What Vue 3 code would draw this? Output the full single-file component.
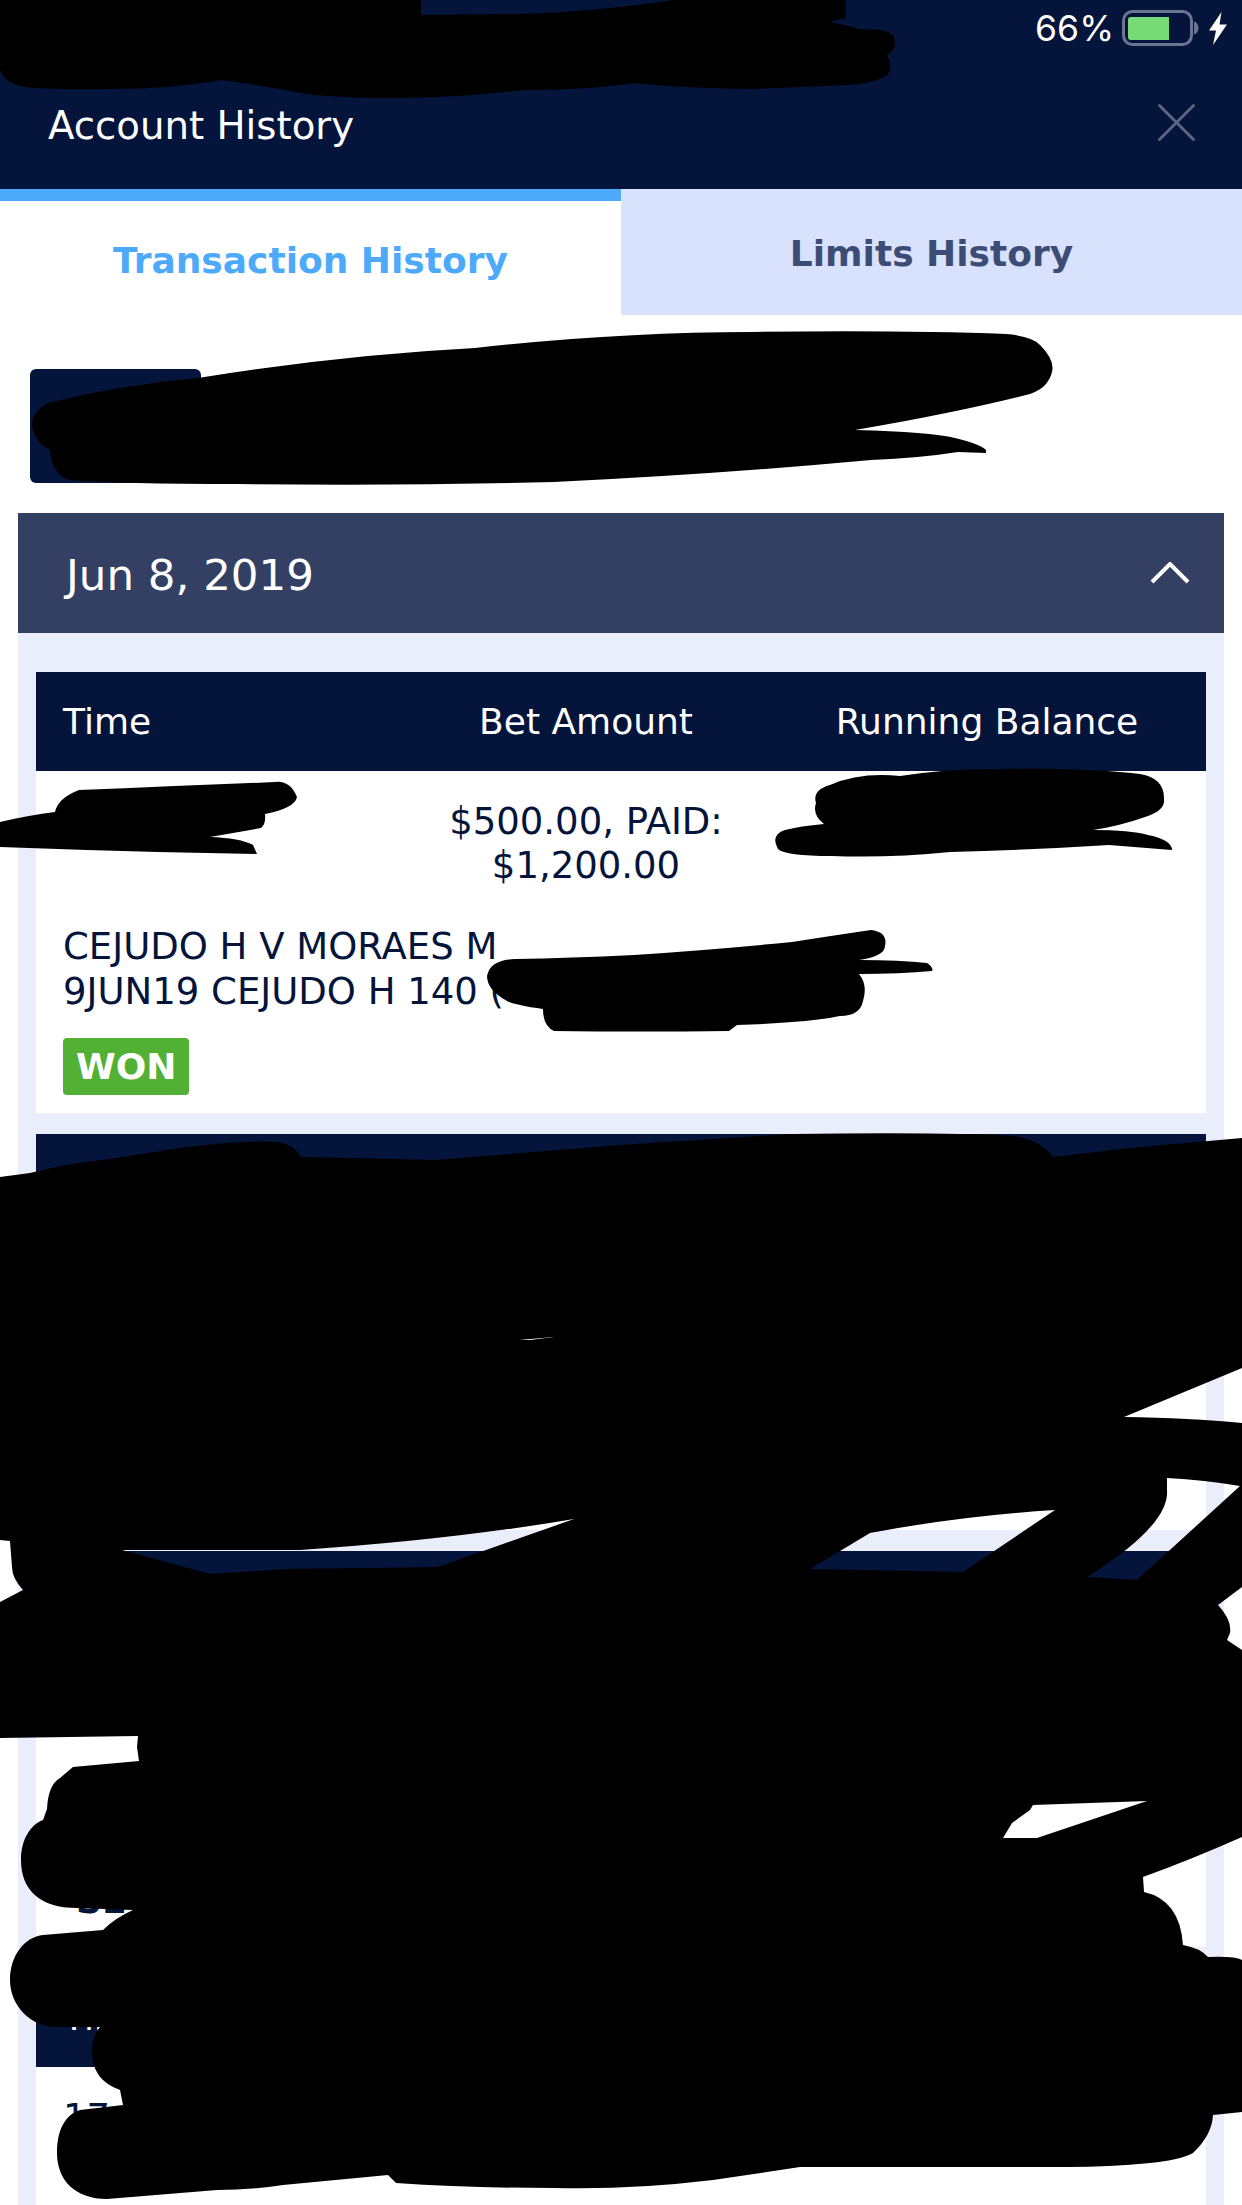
<template>
  <div class="page">
    <header class="nav">
      <div class="status">
        <span class="pct">66%</span>
        <svg class="battery" width="80" height="36" viewBox="0 0 80 36">
          <rect x="3.500" y="1.500" width="68" height="33" rx="9" fill="none" stroke="#6b7591" stroke-width="3" />
          <path d="M8 10a3 3 0 0 1 3-3h38v23H11a3 3 0 0 1-3-3z" fill="#78d977" />
          <path d="M74 11.500c3 1 4.500 3.500 4.500 6.500s-1.500 5.500-4.500 6.500z" fill="#6b7591" />
        </svg>
        <svg class="bolt" width="18" height="33" viewBox="0 0 18 33">
          <path d="M12.500 0 0 18.500h7L4 33 18 12.500h-7.500z" fill="#fff" />
        </svg>
      </div>
      <div class="title-row">
        <span class="title">Account History</span>
        <svg class="close" width="37" height="37" viewBox="0 0 37 37">
          <path d="M1.500 1.500l34 34M35.500 1.500l-34 34" stroke="#5d6781" stroke-width="2.800" stroke-linecap="round" />
        </svg>
      </div>
    </header>

    <nav class="tabs">
      <div class="tab active">Transaction History</div>
      <div class="tab">Limits History</div>
    </nav>

    <div class="filter-row">
      <div class="filter-box"></div>
    </div>

    <section class="day">
      <div class="day-head">
        <span class="day-date">Jun 8, 2019</span>
        <svg width="40" height="22" viewBox="0 0 40 22">
          <path d="M2 20 20 2l18 18" fill="none" stroke="#fff" stroke-width="4" />
        </svg>
      </div>
      <div class="day-body">
        <article v-for="bet in bets" :key="bet.id" class="card">
          <div class="card-head">
            <span>Time</span>
            <span class="center">Bet Amount</span>
            <span class="center">Running Balance</span>
          </div>
          <div class="card-row">
            <span>{{ bet.time }}</span>
            <span class="center">
              <span v-for="line in bet.amount" :key="line" class="line">{{ line }}</span>
            </span>
            <span></span>
          </div>
          <div class="desc">
            <span v-for="line in bet.desc" :key="line" class="line">{{ line }}</span>
          </div>
          <span class="badge" :class="bet.statusClass">{{ bet.status }}</span>
        </article>
      </div>
    </section>

    <!-- marker scribbles on top of the screenshot -->
    <svg class="scribble" width="1242" height="2205" viewBox="0 0 1242 2205">
      <path d="M0 0H421V15L520 14Q590 12 675 0H846V18L830 22Q850 26 859 29L880 30Q895 32 895 42Q895 52 887 55Q893 66 888 74Q880 82 850 85L750 89Q680 88 634 83Q590 90 523 90Q460 98 396 98Q330 98 301 93Q260 85 222 80Q170 89 111 89Q40 90 20 86Q5 82 0 70Z" />
      <path d="M48 403Q120 385 198 378Q340 355 475 348Q620 332 752 332Q900 330 1006 334Q1032 336 1040 345Q1055 360 1052 372Q1048 388 1030 394Q960 412 855 430Q930 432 955 438Q980 444 986 450L986 453L958 452Q920 458 871 460Q720 474 554 482Q400 486 237 484Q120 484 71 480Q52 476 50 450Q32 440 32 423Q34 410 48 403Z" />
      <path d="M0 822Q30 815 55 812Q58 798 79 790Q180 786 275 782Q290 780 297 797Q295 808 265 814Q266 824 261 828L210 837Q240 838 253 845L257 854L158 852Q80 850 0 847Z" />
      <path d="M816 803Q812 790 830 785Q860 772 900 776Q950 768 1000 769Q1090 768 1140 774Q1165 778 1164 800Q1165 810 1148 816Q1120 826 1093 830Q1130 830 1148 835Q1172 840 1172 850L1109 845Q1030 850 950 852Q890 858 832 856Q785 856 778 849Q770 835 785 830Q800 826 824 824Q812 815 816 803Z" />
      <path d="M487 976Q490 960 515 959Q570 958 634 955Q710 950 792 942Q830 936 871 930Q888 932 885 946Q885 956 859 960Q900 960 927 963Q934 968 932 971Q900 974 859 974Q868 985 863 1001Q860 1016 840 1016Q820 1020 792 1022Q770 1024 737 1025L729 1031Q640 1032 554 1031Q543 1026 543 1009Q515 1005 507 1001Q487 990 487 976Z" />
      <path
        fill-rule="evenodd"
        d="M0 1177L30 1173Q70 1163 103 1160L180 1148Q238 1140 277 1142Q295 1145 301 1157L436 1160L620 1145L792 1134Q950 1132 1014 1136Q1040 1140 1053 1157L1130 1148L1242 1138L1242 1368L1124 1417Q1190 1418 1242 1423L1242 1587L1218 1605Q1232 1620 1230 1633L1227 1640L1242 1650L1242 1837Q1190 1860 1143 1877L1144 1892Q1180 1900 1183 1945Q1200 1948 1208 1957Q1235 1956 1242 1960L1242 2112L1213 2115Q1212 2135 1193 2153Q1180 2160 1150 2163Q1110 2167 1067 2167L800 2167L713 2180Q630 2190 554 2188Q470 2188 396 2183L388 2175L283 2185Q250 2190 217 2190L107 2199C75 2199 57 2180 57 2153C57 2130 65 2115 80 2110L123 2105L120 2090Q92 2080 92 2052Q92 2036 100 2027L57 2027C30 2027 10 2005 10 1980C10 1955 25 1937 43 1935L103 1930Q115 1918 133 1910L77 1908C40 1908 21 1890 21 1860C21 1840 30 1825 43 1820L47 1809Q48 1785 60 1778L73 1767L139 1761L137 1747L138 1736L0 1738L0 1602L23 1590Q12 1578 12 1567L10 1541L0 1540Z
           M122 1550L210 1574L287 1569L438 1567L574 1519Q450 1540 300 1550Z
           M1055 1510L963 1572L810 1569L870 1533Q960 1516 1055 1510Z
           M1167 1478Q1205 1480 1240 1486L1137 1580L1087 1577Q1170 1525 1167 1490Z
           M1033 1805L1147 1801L1037 1838L1003 1838L1012 1823L1030 1810Z
           M519 1340L554 1337L530 1340Z"
      />
    </svg>
  </div>
</template>

<script setup>
const bets = [
  {
    id: 1,
    time: '',
    amount: ['$500.00, PAID:', '$1,200.00'],
    desc: ['CEJUDO H V MORAES M', '9JUN19 CEJUDO H 140 ('],
    status: 'WON',
    statusClass: 'won',
  },
  { id: 2, time: '', amount: [], desc: [], status: '', statusClass: '' },
  { id: 3, time: '', amount: [], desc: [], status: 'SE', statusClass: '' },
  { id: 4, time: '17', amount: [], desc: [], status: '', statusClass: '' },
]
</script>

<style>
body {
  background: #fff;
}
</style>

<style scoped>
.page {
  position: relative;
  width: 1242px;
  height: 2205px;
  overflow: hidden;
  background: #fff;
  font-family: 'DejaVu Sans', Verdana, sans-serif;
  color: #04143a;
}

.nav {
  height: 189px;
  background: #04143a;
  color: #fff;
}

.status {
  display: flex;
  justify-content: flex-end;
  align-items: center;
  height: 56px;
  padding-right: 15px;
}

.pct {
  font-family: Inter, 'Noto Sans', sans-serif;
  font-size: 35.500px;
  margin-right: 6px;
}

.battery {
  margin-right: 9px;
}

.title-row {
  display: flex;
  justify-content: space-between;
  align-items: center;
  height: 133px;
  padding: 0 47px 0 48px;
}

.title {
  padding-top: 5px;
  font-size: 38.700px;
}

.tabs {
  display: grid;
  grid-template-columns: 1fr 1fr;
  align-items: start;
}

.tab {
  display: flex;
  justify-content: center;
  align-items: center;
  box-sizing: border-box;
  height: 126px;
  padding-top: 2px;
  background: #d8e2fc;
  color: #3d4c75;
  font-size: 36px;
  font-weight: 700;
}

.tab.active {
  padding-top: 4px;
  border-top: 12px solid #4daafa;
  background: #fff;
  color: #4daafa;
}

.filter-row {
  height: 198px;
  padding: 54px 30px 0;
  box-sizing: border-box;
}

.filter-box {
  width: 171px;
  height: 114px;
  border-radius: 6px;
  background: #04143a;
}

.day {
  margin: 0 18px;
}

.day-head {
  display: flex;
  justify-content: space-between;
  align-items: center;
  height: 120px;
  padding: 0 34px 0 48px;
  background: #334063;
  color: #fff;
  font-size: 43.500px;
}

.day-date {
  padding-top: 4px;
}

.day-body {
  display: flex;
  flex-direction: column;
  gap: 21px;
  padding: 39px 18px 0;
  background: #eaeefb;
}

.card {
  display: flex;
  flex-direction: column;
  align-items: flex-start;
  background: #fff;
  font-size: 37px;
}

.card-head,
.card-row {
  display: grid;
  grid-template-columns: 368px 364px 438px;
  width: 100%;
}

.card-head {
  align-items: center;
  height: 99px;
  background: #04143a;
  color: #fff;
  font-size: 36px;
}

.card-head span:first-child,
.card-row > span:first-child {
  padding-left: 27px;
}

.card-row {
  min-height: 43px;
  padding-top: 29px;
  line-height: 44px;
}

.center {
  text-align: center;
}

.line {
  display: block;
}

.desc {
  margin-top: 36px;
  min-height: 90px;
  padding-left: 27px;
  line-height: 45px;
  white-space: nowrap;
}

.badge {
  margin: 24px 0 18px 27px;
  padding: 0 13px;
  height: 57px;
  line-height: 57px;
  border-radius: 4px;
  font-size: 36px;
  font-weight: 700;
}

.won {
  background: #52b135;
  color: #fff;
}

.scribble {
  position: absolute;
  left: 0;
  top: 0;
}
</style>
